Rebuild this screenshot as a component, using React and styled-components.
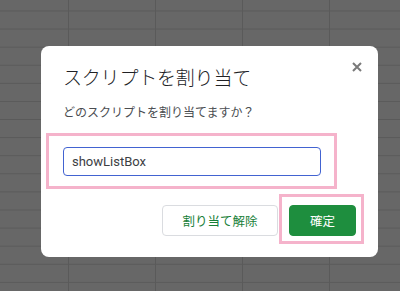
import styled, { createGlobalStyle } from 'styled-components'

const GlobalStyle = createGlobalStyle`
  html, body {
    margin: 0;
    padding: 0;
  }
  body {
    width: 400px;
    height: 291px;
    overflow: hidden;
    background-color: #676767;
    background-image:
      repeating-linear-gradient(to right, transparent 0, transparent 68px, #5a5a5a 68px, #5a5a5a 69px, transparent 69px, transparent 87px),
      repeating-linear-gradient(to bottom, transparent 0, transparent 10px, #5a5a5a 10px, #5a5a5a 11px, transparent 11px, transparent 18.1px);
    background-size: 87px 100%, 100% 18.1px;
    font-family: Roboto, "Noto Sans CJK JP", "Liberation Sans", sans-serif;
  }
`

const Backdrop = styled.div`
  padding: 46px 0 0 41px;
`

const Dialog = styled.div`
  position: relative;
  box-sizing: border-box;
  width: 337px;
  height: 211px;
  background: #fff;
  border-radius: 8px;
  padding: 21px 22px 21px 22px;
  display: flex;
  flex-direction: column;
`

const Title = styled.h2`
  margin: 0;
  font-size: 19px;
  line-height: 24px;
  font-weight: 300;
  color: #202124;
  letter-spacing: -0.2px;
`

const Prompt = styled.p`
  margin: 14px 0 0;
  font-size: 12px;
  line-height: 16px;
  font-weight: 400;
  color: #4a4d51;
`

const Close = styled.button`
  position: absolute;
  top: 16px;
  right: 16px;
  width: 10px;
  height: 10px;
  padding: 0;
  border: none;
  background: none;
  display: flex;
`

// pink annotation frame drawn over the marked control
const Marked = styled.div`
  position: relative;
  &::after {
    content: '';
    position: absolute;
    top: ${p => p.$t}px;
    right: ${p => p.$r}px;
    bottom: ${p => p.$b}px;
    left: ${p => p.$l}px;
    border: 3px solid #f5b3cb;
    pointer-events: none;
  }
`

const FieldWrap = styled(Marked)`
  margin-top: 26px;
  width: 258px;
`

const Field = styled.input`
  box-sizing: border-box;
  display: block;
  width: 258px;
  height: 29px;
  margin: 0;
  padding: 0 8px;
  border: 1.5px solid #4263d1;
  border-radius: 4px;
  font-family: Roboto, "Noto Sans CJK JP", sans-serif;
  font-size: 13px;
  color: #3c4043;
  outline: none;
`

const Actions = styled.div`
  margin-top: auto;
  display: flex;
  justify-content: flex-end;
  gap: 11px;
`

const Button = styled.button`
  box-sizing: border-box;
  height: 31px;
  width: ${p => p.$w}px;
  border-radius: 4px;
  font-family: Roboto, "Noto Sans CJK JP", sans-serif;
  font-size: 12.5px;
  font-weight: 400;
  padding: 0;
  border: 1px solid ${p => (p.$primary ? '#1e8e3e' : '#dadce0')};
  background: ${p => (p.$primary ? '#1e8e3e' : '#fff')};
  color: ${p => (p.$primary ? '#fff' : '#188038')};
`

export default function App() {
  return (
    <>
      <GlobalStyle />
      <Backdrop>
        <Dialog>
          <Close aria-label="閉じる">
            <svg width="10" height="10" viewBox="0 0 10 10">
              <path d="M1 1 L9 9 M9 1 L1 9" stroke="#7a7a7a" strokeWidth="2" />
            </svg>
          </Close>
          <Title>スクリプトを割り当て</Title>
          <Prompt>どのスクリプトを割り当てますか？</Prompt>
          <FieldWrap $t={-14} $r={-16} $b={-13} $l={-17}>
            <Field defaultValue="showListBox" />
          </FieldWrap>
          <Actions>
            <Button $w={116}>割り当て解除</Button>
            <Marked $t={-11} $r={-8} $b={-8} $l={-10}>
              <Button $w={67} $primary>確定</Button>
            </Marked>
          </Actions>
        </Dialog>
      </Backdrop>
    </>
  )
}
